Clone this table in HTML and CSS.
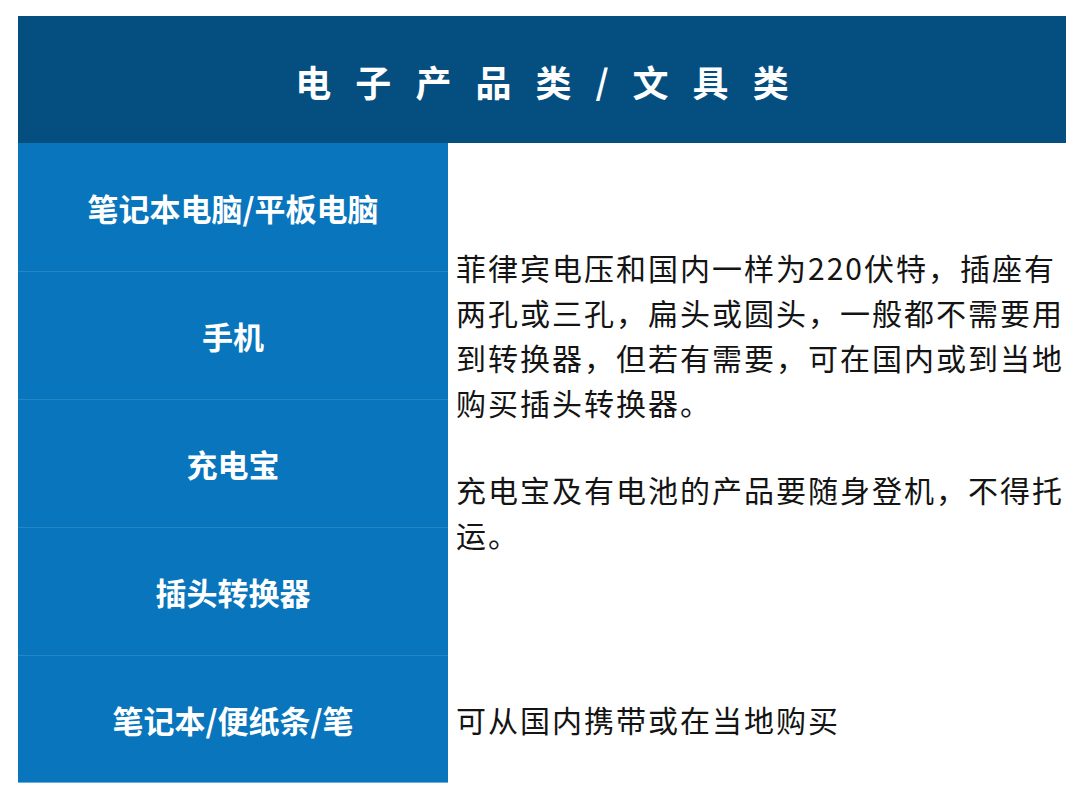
FILE: index.html
```html
<!DOCTYPE html>
<html lang="zh-CN">
<head>
<meta charset="utf-8">
<title>电子产品类 / 文具类</title>
<link rel="stylesheet" href="styles.css">
</head>
<body>
<div class="sheet">
  <div class="title">
    <span>电</span><span>子</span><span>产</span><span>品</span><span>类</span><span class="slash">/</span><span>文</span><span>具</span><span>类</span>
  </div>
  <div class="grid">
    <div class="label r1">笔记本电脑/平板电脑</div>
    <div class="label r2">手机</div>
    <div class="label r3">充电宝</div>
    <div class="label r4">插头转换器</div>
    <div class="label r5">笔记本/便纸条/笔</div>
    <div class="info big">
      <p>菲律宾电压和国内一样为220伏特，插座有两孔或三孔，扁头或圆头，一般都不需要用到转换器，但若有需要，可在国内或到当地购买插头转换器。</p>
      <p>充电宝及有电池的产品要随身登机，不得托运。</p>
    </div>
    <div class="info small">
      <p>可从国内携带或在当地购买</p>
    </div>
  </div>
</div>
</body>
</html>
```

FILE: styles.css
```css
html, body {
  margin: 0;
  padding: 0;
  background: #ffffff;
}
body {
  font-family: "Noto Sans CJK SC", "Noto Sans", sans-serif;
}
.sheet {
  margin: 16px 0 0 18px;
  width: 1048px;
}
.title {
  height: 127px;
  background: #044e80;
  color: #ffffff;
  display: flex;
  align-items: center;
  justify-content: center;
  gap: 24px;
  font-size: 36px;
  font-weight: 700;
  line-height: 1;
  padding-top: 2px;
  box-sizing: border-box;
}
.title .slash {
  font-size: 34px;
}
.grid {
  display: grid;
  grid-template-columns: 430px 618px;
  grid-template-rows: repeat(5, 128px);
}
.label {
  grid-column: 1;
  background: #0875bc;
  color: #ffffff;
  font-size: 31px;
  font-weight: 700;
  display: flex;
  align-items: center;
  justify-content: center;
  box-sizing: border-box;
}
.label + .label {
  border-top: 1px solid #2586c6;
}
.r1 { grid-row: 1; }
.r2 { grid-row: 2; }
.r3 { grid-row: 3; }
.r4 { grid-row: 4; }
.r5 { grid-row: 5; border-bottom: 1px solid #6aaedc; }
.info {
  grid-column: 2;
  display: flex;
  flex-direction: column;
  justify-content: center;
  padding: 0 0 0 8px;
  color: #141414;
  font-size: 30px;
  letter-spacing: 2px;
  line-height: 45px;
}
.info p {
  margin: 0;
}
.info p + p {
  margin-top: 42px;
}
.big {
  grid-row: 1 / span 4;
  padding-top: 4px;
}
.small {
  grid-row: 5;
}
```
